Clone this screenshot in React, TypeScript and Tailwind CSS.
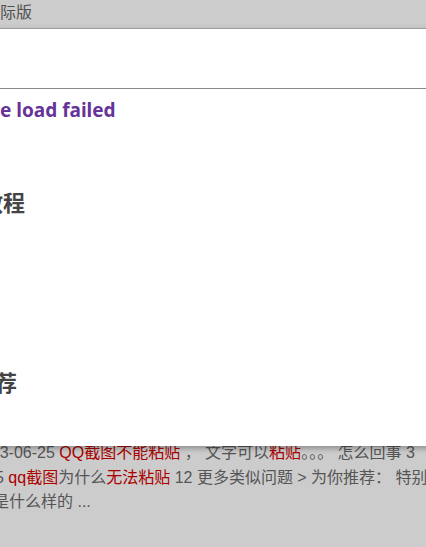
export default function App() {
  return (
    <div
      className="relative h-[547px] w-[426px] overflow-hidden bg-[#cccccc]"
      style={{ fontFamily: '"Liberation Sans", "Noto Sans CJK SC", sans-serif' }}
    >
      {/* page underneath the dialog */}
      <div className="h-[29px] border-b border-[#aaaaaa] whitespace-nowrap text-[16px] leading-[26px] text-[#505050]">
        <span className="-ml-[16px]">国际版</span>
      </div>

      <div className="mt-[412px] whitespace-nowrap text-[16px] leading-[24.5px] text-[#555555]">
        <div className="-ml-[27px]">
          2023-06-25 <span className="text-[#aa0000]">QQ截图不能粘贴</span> ， 文字可以<span className="text-[#aa0000]">粘贴</span>。。。 怎么回事 3
        </div>
        <div className="-ml-[5px]">
          5 <span className="text-[#aa0000]">qq截图</span>为什么<span className="text-[#aa0000]">无法粘贴</span> 12 更多类似问题 &gt; 为你推荐： 特别
        </div>
        <div className="-ml-[7px]">是什么样的 ...</div>
      </div>

      {/* dialog */}
      <div className="absolute left-[-40px] right-[-40px] top-[29px] h-[417px] bg-white shadow-[0_2px_6px_rgba(0,0,0,0.35)]">
        <div className="h-[60px] border-b border-[#888888]" />
        <div
          className="mt-[7px] whitespace-nowrap pl-[40px] text-[19px] font-bold leading-[28px] text-[#663399]"
          style={{ fontFamily: '"Noto Sans", sans-serif' }}
        >
          e load failed
        </div>
        <div
          className="mt-[62px] whitespace-nowrap pl-[40px] text-[22px] font-bold leading-[30px] text-[#444444]"
          style={{ fontFamily: '"Noto Sans CJK SC", sans-serif' }}
        >
          <span className="-ml-[19px]">教程</span>
        </div>
        <div
          className="mt-[150px] whitespace-nowrap pl-[40px] text-[22px] font-bold leading-[30px] text-[#444444]"
          style={{ fontFamily: '"Noto Sans CJK SC", sans-serif' }}
        >
          <span className="-ml-[27px]">推荐</span>
        </div>
      </div>
    </div>
  );
}
